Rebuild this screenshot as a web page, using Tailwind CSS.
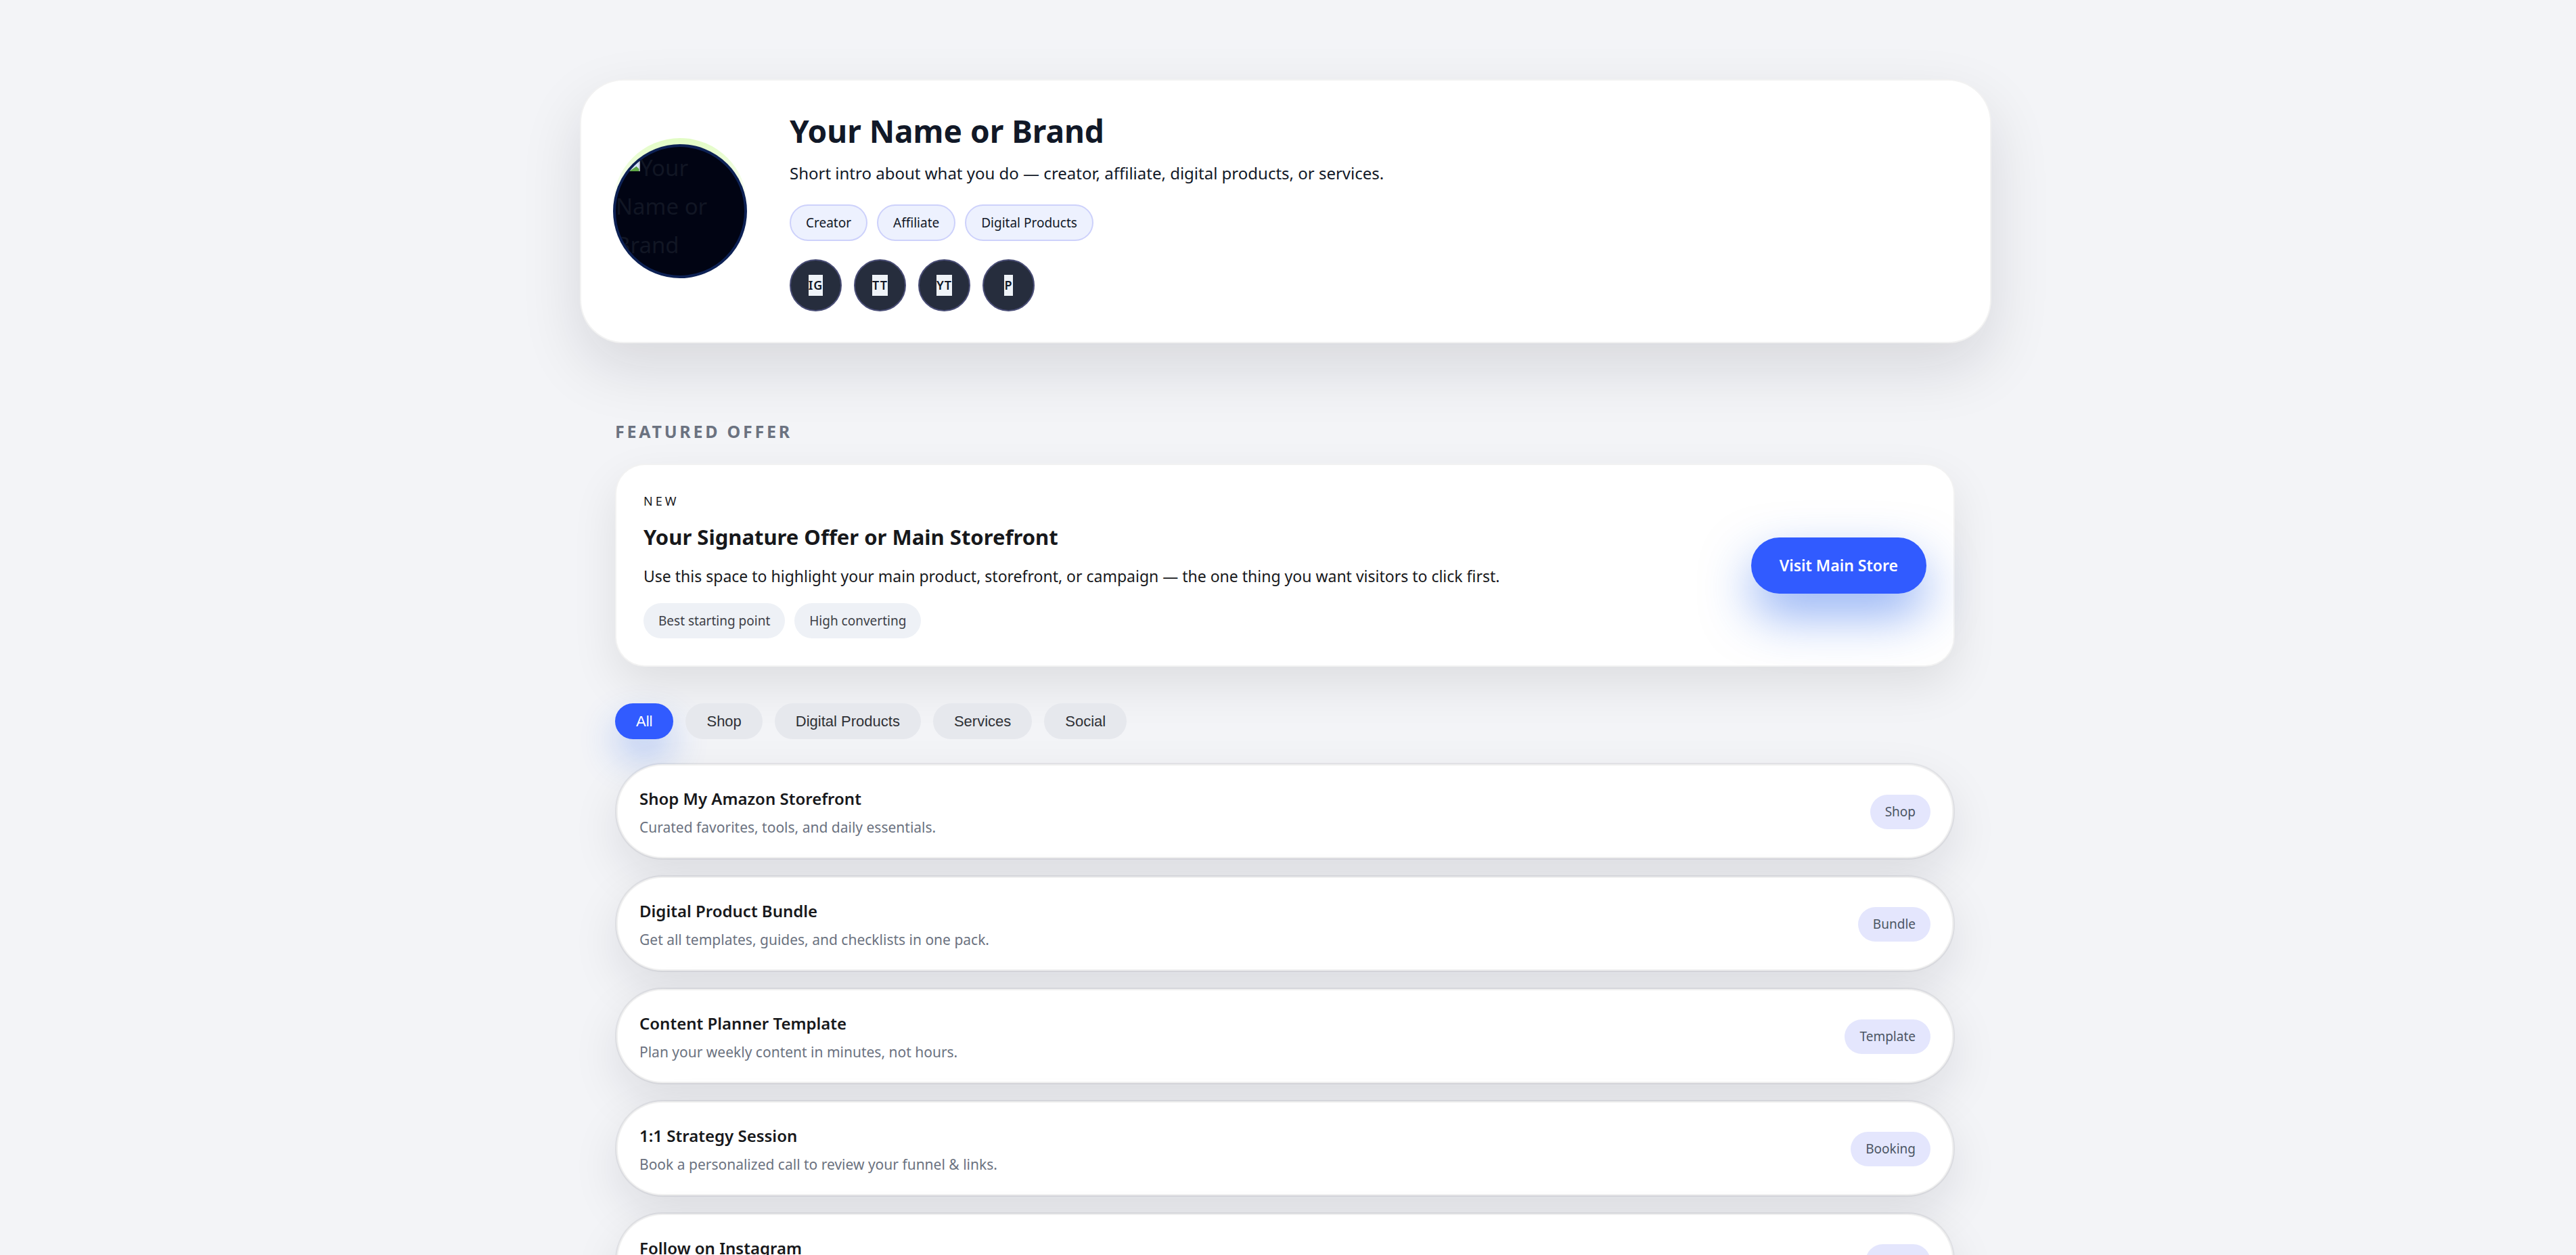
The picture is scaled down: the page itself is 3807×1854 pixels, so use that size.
<!DOCTYPE html>
<html lang="en">
<head>
    <meta charset="UTF-8">
    <meta name="viewport" content="width=device-width, initial-scale=1.0">
    <title>Your Name or Brand</title>
    <script src="https://cdn.jsdelivr.net/npm/@tailwindcss/browser@4"></script>
</head>
<body class="bg-[#f3f4f7] pr-[7px] font-['Noto_Sans','Open_Sans',sans-serif] text-[#17181b] overflow-hidden h-screen">
    <div class="mx-auto max-w-[2086px] pt-[117px]">

        <!-- Profile -->
        <header class="flex items-center gap-[63px] rounded-[64px] border-2 border-black/5 bg-white px-[47px] py-[45px] shadow-[0_36px_90px_rgba(15,15,35,0.12)]">
            <div class="relative shrink-0">
                <div class="absolute inset-x-0 -top-[9px] h-[198px] rounded-full bg-linear-to-b from-[#e2fcc4] to-transparent to-50%"></div>
                <div class="relative size-[198px] overflow-hidden rounded-full border-4 border-[#0d2154] bg-[#010413] pt-0.5 text-[33px] leading-[57px] text-[#111624]">
                    <div class="flex">
                        <svg class="ml-1 mt-0.5 size-8 shrink-0" viewBox="0 0 16 16" aria-hidden="true">
                            <path d="M0 0h12l4 4v12H0z" fill="#a3a6ad"/>
                            <path d="M1 1h10.500l3.700 3.500V16H1z" fill="#d3e0f8"/>
                            <path d="M8 16l5.300-3.600 1.900 2V16z" fill="#5fa845"/>
                            <path d="M12 0v4h4z" fill="#e8ecf3"/>
                        </svg>
                        <span>Your</span>
                    </div>
                    <div>Name or</div>
                    <div>Brand</div>
                </div>
            </div>
            <div class="text-[#111827]">
                <h1 class="text-[46px] leading-[58px] font-bold">Your Name or Brand</h1>
                <p class="mt-3 text-[24px] leading-[44px]">Short intro about what you do — creator, affiliate, digital products, or services.</p>
                <div class="mt-6 flex gap-[14px] text-[19px] leading-[50px]">
                    <span class="rounded-full border-2 border-[#cdd1fb] bg-[#edf1fe] px-[22px]">Creator</span>
                    <span class="rounded-full border-2 border-[#cdd1fb] bg-[#edf1fe] px-[22px]">Affiliate</span>
                    <span class="rounded-full border-2 border-[#cdd1fb] bg-[#edf1fe] px-[22px]">Digital Products</span>
                </div>
                <nav class="mt-[27px] flex gap-[18px] text-[18px] leading-[31px] font-semibold tracking-[1px]">
                    <a href="#" aria-label="Instagram" class="flex size-[77px] items-center justify-center rounded-full border-2 border-[#494d75] bg-[#262d3d]"><span class="bg-[#eff3f8]">IG</span></a>
                    <a href="#" aria-label="TikTok" class="flex size-[77px] items-center justify-center rounded-full border-2 border-[#494d75] bg-[#262d3d]"><span class="bg-[#eff3f8]">TT</span></a>
                    <a href="#" aria-label="YouTube" class="flex size-[77px] items-center justify-center rounded-full border-2 border-[#494d75] bg-[#262d3d]"><span class="bg-[#eff3f8]">YT</span></a>
                    <a href="#" aria-label="Pinterest" class="flex size-[77px] items-center justify-center rounded-full border-2 border-[#494d75] bg-[#262d3d]"><span class="bg-[#eff3f8]">P</span></a>
                </nav>
            </div>
        </header>

        <main class="pt-[110px] pr-[54px] pl-[52px]">
            <!-- Featured offer -->
            <h2 class="text-[25px] leading-[40px] font-bold tracking-[0.15em] text-[#6b7280]">FEATURED OFFER</h2>
            <section class="mt-[28px] flex items-center justify-between rounded-[44px] border-2 border-black/5 bg-white p-[40px] shadow-[0_27px_68px_rgba(0,0,0,0.09)]">
                <div>
                    <p class="text-[18px] leading-[26px] tracking-[4px]">NEW</p>
                    <h3 class="mt-[19px] text-[31px] leading-[42px] font-bold">Your Signature Offer or Main Storefront</h3>
                    <p class="mt-[18px] text-[23px] leading-[38px]">Use this space to highlight your main product, storefront, or campaign — the one thing you want visitors to click first.</p>
                    <div class="mt-[21px] flex gap-[14px] text-[19px] leading-[52px] text-[#3d4047]">
                        <span class="rounded-full bg-[#eef1f6] px-[22px]">Best starting point</span>
                        <span class="rounded-full bg-[#eef1f6] px-[22px]">High converting</span>
                    </div>
                </div>
                <a href="#" class="rounded-full bg-[#315bff] px-[42px] text-[23px] leading-[83px] font-semibold text-white shadow-[0_32px_72px_rgba(37,99,235,0.5)]">Visit Main Store</a>
            </section>

            <!-- Filters -->
            <div class="mt-[54px] flex gap-[18px] font-['Liberation_Sans',Arial,sans-serif] text-[22px] leading-[53px] text-[#2f3136]">
                <button type="button" class="rounded-full bg-[#315bff] px-[31px] text-white shadow-[0_27px_54px_rgba(37,99,235,0.3)]">All</button>
                <button type="button" class="rounded-full bg-[#e6e8ed] px-[31px]">Shop</button>
                <button type="button" class="rounded-full bg-[#e6e8ed] px-[31px]">Digital Products</button>
                <button type="button" class="rounded-full bg-[#e6e8ed] px-[31px]">Services</button>
                <button type="button" class="rounded-full bg-[#e6e8ed] px-[31px]">Social</button>
            </div>

            <!-- Links -->
            <div class="mt-[37px] flex flex-col gap-[27px] px-0.5">
                <a href="#" class="flex items-center justify-between rounded-[68px] border-2 border-black/6 bg-white px-8 pt-[26px] pb-6 shadow-[0_0_0_2px_rgba(15,15,35,0.06),0_27px_70px_rgba(15,15,35,0.1)]">
                    <span>
                        <span class="block text-[24px] leading-[45px] font-semibold">Shop My Amazon Storefront</span>
                        <span class="block text-[21px] leading-[40px] text-[#6b7280]">Curated favorites, tools, and daily essentials.</span>
                    </span>
                    <span class="rounded-full bg-[#e4e6fd] px-[22px] text-[19px] leading-[51px] text-[#4b5563]">Shop</span>
                </a>
                <a href="#" class="flex items-center justify-between rounded-[68px] border-2 border-black/6 bg-white px-8 pt-[26px] pb-6 shadow-[0_0_0_2px_rgba(15,15,35,0.06),0_27px_70px_rgba(15,15,35,0.1)]">
                    <span>
                        <span class="block text-[24px] leading-[45px] font-semibold">Digital Product Bundle</span>
                        <span class="block text-[21px] leading-[40px] text-[#6b7280]">Get all templates, guides, and checklists in one pack.</span>
                    </span>
                    <span class="rounded-full bg-[#e4e6fd] px-[22px] text-[19px] leading-[51px] text-[#4b5563]">Bundle</span>
                </a>
                <a href="#" class="flex items-center justify-between rounded-[68px] border-2 border-black/6 bg-white px-8 pt-[26px] pb-6 shadow-[0_0_0_2px_rgba(15,15,35,0.06),0_27px_70px_rgba(15,15,35,0.1)]">
                    <span>
                        <span class="block text-[24px] leading-[45px] font-semibold">Content Planner Template</span>
                        <span class="block text-[21px] leading-[40px] text-[#6b7280]">Plan your weekly content in minutes, not hours.</span>
                    </span>
                    <span class="rounded-full bg-[#e4e6fd] px-[22px] text-[19px] leading-[51px] text-[#4b5563]">Template</span>
                </a>
                <a href="#" class="flex items-center justify-between rounded-[68px] border-2 border-black/6 bg-white px-8 pt-[26px] pb-6 shadow-[0_0_0_2px_rgba(15,15,35,0.06),0_27px_70px_rgba(15,15,35,0.1)]">
                    <span>
                        <span class="block text-[24px] leading-[45px] font-semibold">1:1 Strategy Session</span>
                        <span class="block text-[21px] leading-[40px] text-[#6b7280]">Book a personalized call to review your funnel &amp; links.</span>
                    </span>
                    <span class="rounded-full bg-[#e4e6fd] px-[22px] text-[19px] leading-[51px] text-[#4b5563]">Booking</span>
                </a>
                <a href="#" class="flex items-center justify-between rounded-[68px] border-2 border-black/6 bg-white px-8 pt-[26px] pb-6 shadow-[0_0_0_2px_rgba(15,15,35,0.06),0_27px_70px_rgba(15,15,35,0.1)]">
                    <span>
                        <span class="block text-[24px] leading-[45px] font-semibold">Follow on Instagram</span>
                        <span class="block text-[21px] leading-[40px] text-[#6b7280]">Daily tips and behind the scenes.</span>
                    </span>
                    <span class="rounded-full bg-[#e4e6fd] px-[22px] text-[19px] leading-[51px] text-[#4b5563]">Social</span>
                </a>
            </div>
        </main>
    </div>
</body>
</html>
